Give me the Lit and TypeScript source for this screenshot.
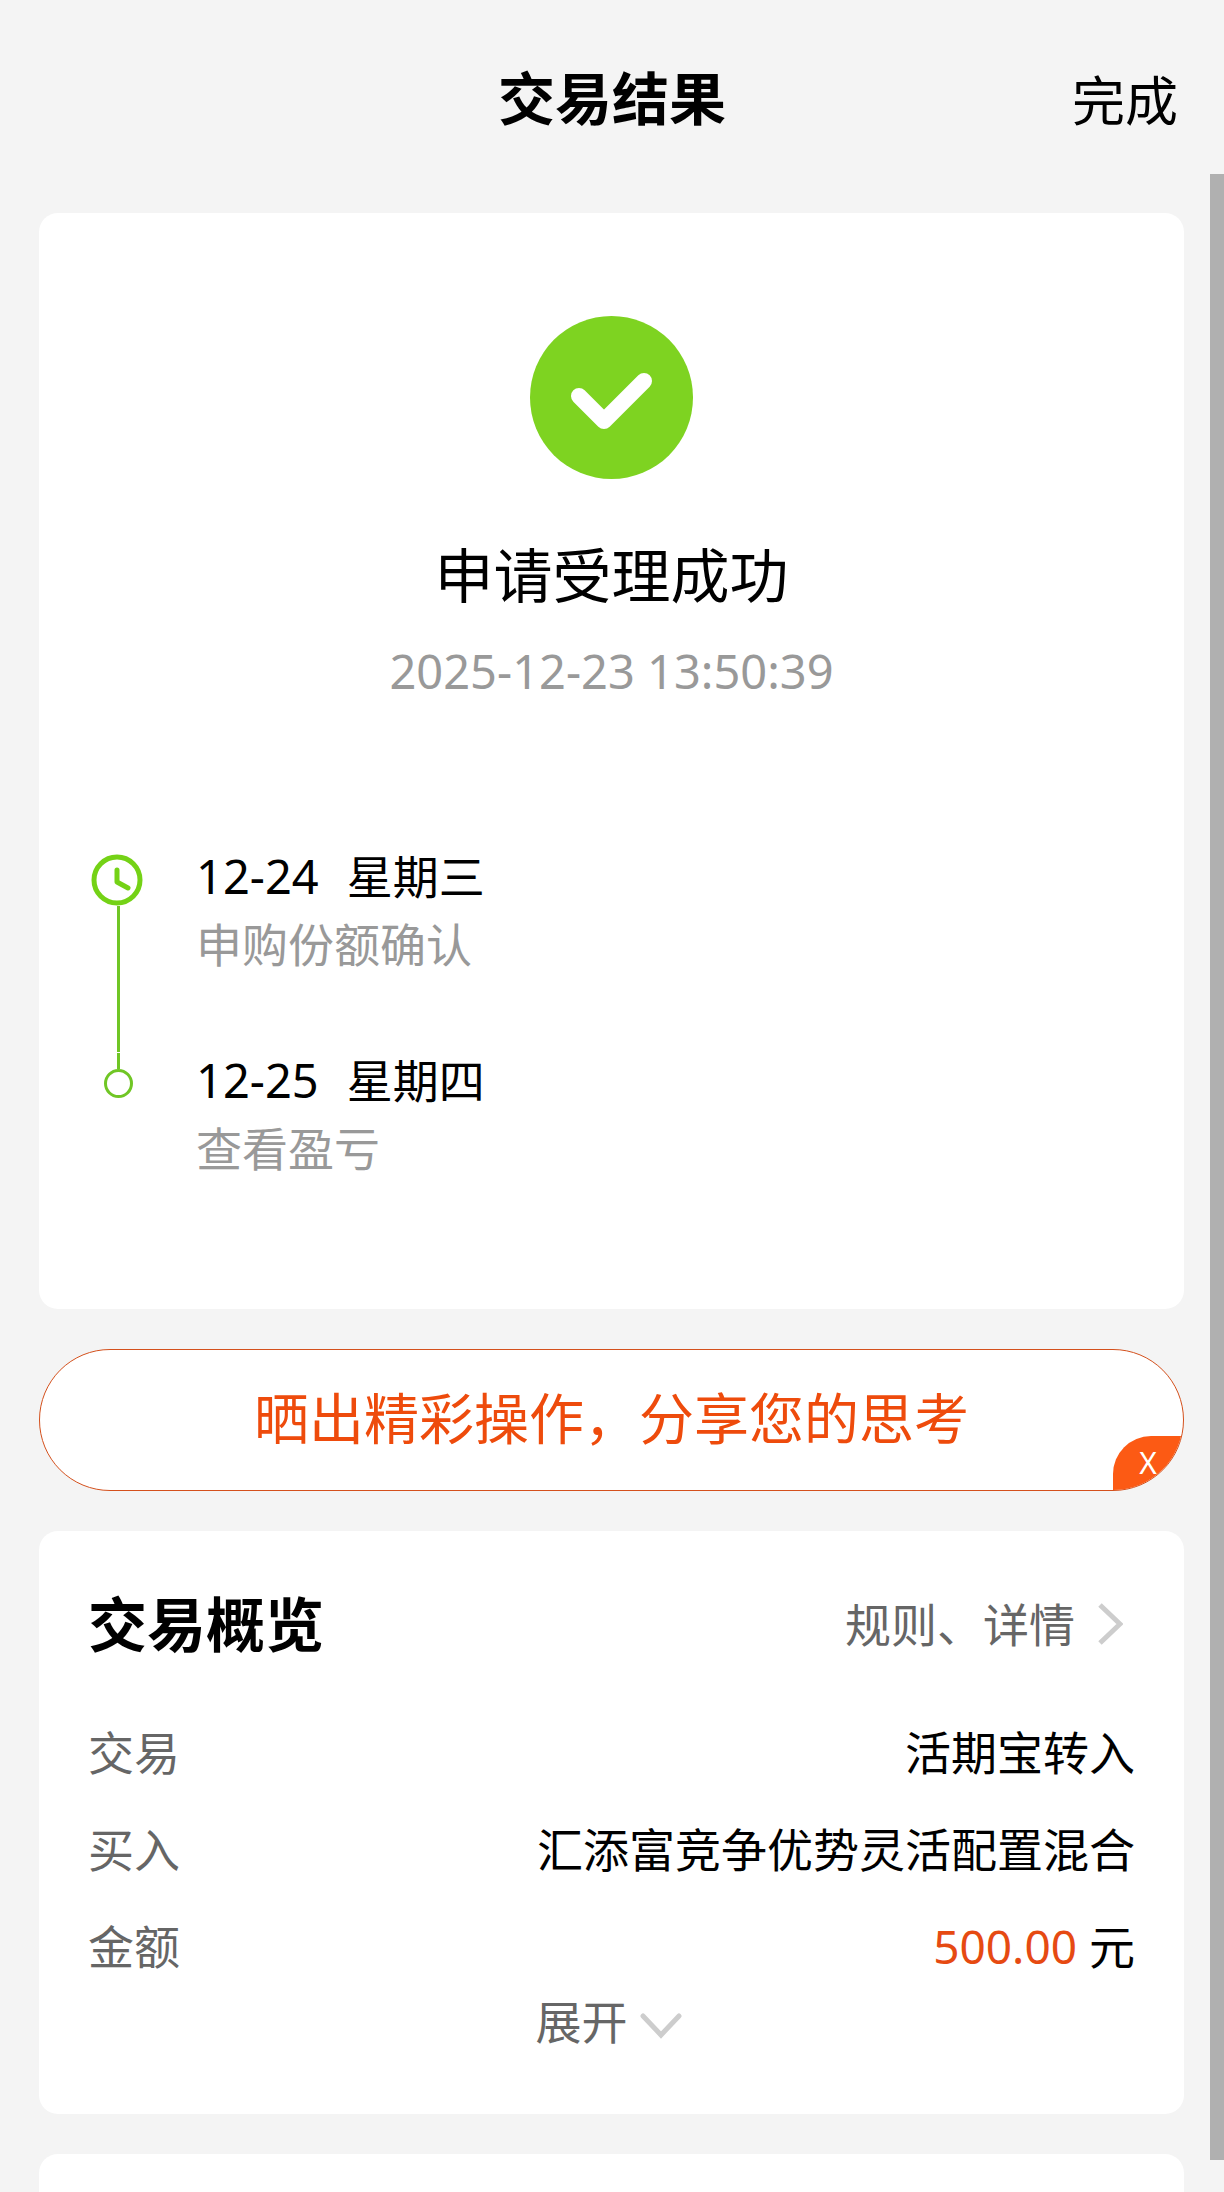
import { LitElement, html, css, svg } from "lit";
import { customElement, property } from "lit/decorators.js";

interface Step {
  date: string;
  weekday: string;
  label: string;
}

const STEPS: Step[] = [
  { date: "12-24", weekday: "星期三", label: "申购份额确认" },
  { date: "12-25", weekday: "星期四", label: "查看盈亏" },
];

const clockIcon = svg`
  <circle cx="26" cy="26" r="23" fill="none" stroke="#74d216" stroke-width="5"></circle>
  <path d="M26 16v12l11 6" fill="none" stroke="#74d216" stroke-width="5"
    stroke-linecap="round" stroke-linejoin="round"></path>`;

@customElement("result-timeline")
export class ResultTimeline extends LitElement {
  @property({ attribute: false }) steps: Step[] = [];

  static styles = css`
    :host {
      display: block;
    }
    .steps {
      list-style: none;
      margin: 0;
      padding: 0;
    }
    .step {
      display: flex;
      gap: 50px;
    }
    .rail {
      display: flex;
      flex-direction: column;
      align-items: center;
      width: 55px;
    }
    .clock {
      display: block;
      align-self: flex-start;
      width: 52px;
      height: 52px;
      margin-top: 6px;
    }
    .line {
      flex: 1;
      width: 3px;
      background: #70c625;
    }
    .stub {
      width: 3px;
      height: 16px;
      margin-top: 1px;
      background: #70c625;
    }
    .dot {
      box-sizing: border-box;
      width: 29px;
      height: 29px;
      border: 3px solid #70c625;
      border-radius: 50%;
    }
    .body {
      display: flex;
      flex-direction: column;
      gap: 12px;
      line-height: 56px;
    }
    .step:not(:last-child) .body {
      padding-bottom: 80px;
    }
    .when {
      display: flex;
      gap: 28px;
      font-size: 47px;
      color: #000;
    }
    .weekday {
      font-size: 46px;
    }
    .what {
      color: #999;
    }
  `;

  render() {
    return html`<ol class="steps">
      ${this.steps.map(
        (step, i) => html`<li class="step">
          <div class="rail">
            ${i === 0
              ? html`<svg class="clock" viewBox="0 0 52 52" aria-hidden="true">${clockIcon}</svg>
                  <span class="line"></span>`
              : html`<span class="stub"></span><span class="dot"></span>`}
          </div>
          <div class="body">
            <div class="when">
              <span>${step.date}</span><span class="weekday">${step.weekday}</span>
            </div>
            <div class="what">${step.label}</div>
          </div>
        </li>`
      )}
    </ol>`;
  }
}

@customElement("app-root")
export class AppRoot extends LitElement {
  static styles = css`
    :host {
      display: block;
      font-family: "Noto Sans", "Noto Sans CJK SC", sans-serif;
      font-size: 46px;
      line-height: 56px;
      color: #000;
    }
    button {
      margin: 0;
      padding: 0;
      border: 0;
      background: none;
      font: inherit;
      color: inherit;
      cursor: pointer;
    }
    .page {
      position: relative;
      box-sizing: border-box;
      display: flex;
      flex-direction: column;
      min-height: 100vh;
      background: #f4f4f4;
    }
    .bar {
      display: grid;
      grid-template-columns: 1fr auto 1fr;
      align-items: end;
      padding: 58px 46px 75px;
      line-height: 80px;
    }
    .bar-title {
      grid-column: 2;
      margin: 0;
      font-size: 57px;
      font-weight: 700;
    }
    .done {
      justify-self: end;
      font-size: 53px;
      line-height: 74px;
    }
    .content {
      flex: 1;
      display: flex;
      flex-direction: column;
      gap: 40px;
      padding: 0 40px 0 39px;
    }
    .card {
      background: #fff;
      border-radius: 19px;
    }
    .result {
      padding: 103px 52px 133px;
    }
    .status {
      display: flex;
      flex-direction: column;
      align-items: center;
      margin-bottom: 147px;
    }
    .check {
      display: block;
      width: 163px;
      height: 163px;
    }
    .status-title {
      margin: 56px 0 26px;
      font-size: 59px;
      font-weight: 400;
      line-height: 80px;
    }
    .time {
      font-size: 47px;
      line-height: 60px;
      color: #999;
    }
    .share {
      position: relative;
      display: flex;
      overflow: hidden;
      border: 1px solid #d4501c;
      border-radius: 72px;
      background: #fff;
    }
    .share-main {
      flex: 1;
      padding: 28px 0 32px;
      font-size: 55px;
      line-height: 80px;
      color: #ee4b0c;
    }
    .share-close {
      position: absolute;
      right: 0;
      bottom: 0;
      width: 70px;
      height: 54px;
      border-radius: 38px 0 0 0;
      background: #fc5a14;
      font-size: 30px;
      line-height: 54px;
      color: #fff;
    }
    .overview {
      padding: 53px 49px 67px;
    }
    .overview-head {
      display: flex;
      justify-content: space-between;
      align-items: center;
      margin-bottom: 40px;
    }
    .overview-title {
      margin: 0;
      font-size: 59px;
      font-weight: 700;
      line-height: 80px;
    }
    .rules {
      display: flex;
      align-items: center;
      gap: 22px;
      padding-right: 12px;
      color: #666;
      text-decoration: none;
    }
    .arrow-right {
      display: block;
      width: 26px;
      height: 44px;
    }
    .rows {
      margin: 0;
    }
    .row {
      display: flex;
      justify-content: space-between;
      line-height: 97px;
    }
    .row dt {
      color: #666;
    }
    .row dd {
      margin: 0;
    }
    .amount {
      color: #e64a12;
    }
    .expand {
      display: flex;
      justify-content: center;
      align-items: center;
      gap: 12px;
      width: 100%;
      line-height: 52px;
      color: #666;
    }
    .arrow-down {
      display: block;
      width: 48px;
      height: 36px;
    }
    .next {
      flex: 1;
      min-height: 38px;
      border-radius: 19px 19px 0 0;
    }
    .thumb {
      position: absolute;
      top: 174px;
      right: 0;
      bottom: 32px;
      width: 14px;
      background: #b0b0b0;
    }
  `;

  render() {
    return html`<div class="page">
      <header class="bar">
        <h1 class="bar-title">交易结果</h1>
        <button class="done" type="button">完成</button>
      </header>
      <main class="content">
        <section class="card result">
          <div class="status">
            <svg class="check" viewBox="0 0 163 163" aria-hidden="true">
              <circle cx="81.5" cy="81.5" r="81.5" fill="#7ed321"></circle>
              <path d="M49 80l25 25L114 65" fill="none" stroke="#fff" stroke-width="16"
                stroke-linecap="round" stroke-linejoin="round"></path>
            </svg>
            <h2 class="status-title">申请受理成功</h2>
            <time class="time" datetime="2025-12-23T13:50:39">2025-12-23 13:50:39</time>
          </div>
          <result-timeline .steps=${STEPS}></result-timeline>
        </section>
        <div class="share">
          <button class="share-main" type="button">晒出精彩操作，分享您的思考</button>
          <button class="share-close" type="button">X</button>
        </div>
        <section class="card overview">
          <div class="overview-head">
            <h2 class="overview-title">交易概览</h2>
            <a class="rules" href="#rules">
              规则、详情
              <svg class="arrow-right" viewBox="0 0 26 44" aria-hidden="true">
                <path d="M3 3l20 19L3 41" fill="none" stroke="#cdcdcd" stroke-width="5"></path>
              </svg>
            </a>
          </div>
          <dl class="rows">
            <div class="row"><dt>交易</dt><dd>活期宝转入</dd></div>
            <div class="row"><dt>买入</dt><dd>汇添富竞争优势灵活配置混合</dd></div>
            <div class="row"><dt>金额</dt><dd><span class="amount">500.00</span> 元</dd></div>
          </dl>
          <button class="expand" type="button">
            展开
            <svg class="arrow-down" viewBox="0 0 48 36" aria-hidden="true">
              <path d="M3 13l18 19L39 13" fill="none" stroke="#cdcdcd" stroke-width="5"
                stroke-linecap="round"></path>
            </svg>
          </button>
        </section>
        <section class="card next"></section>
      </main>
      <div class="thumb"></div>
    </div>`;
  }
}
